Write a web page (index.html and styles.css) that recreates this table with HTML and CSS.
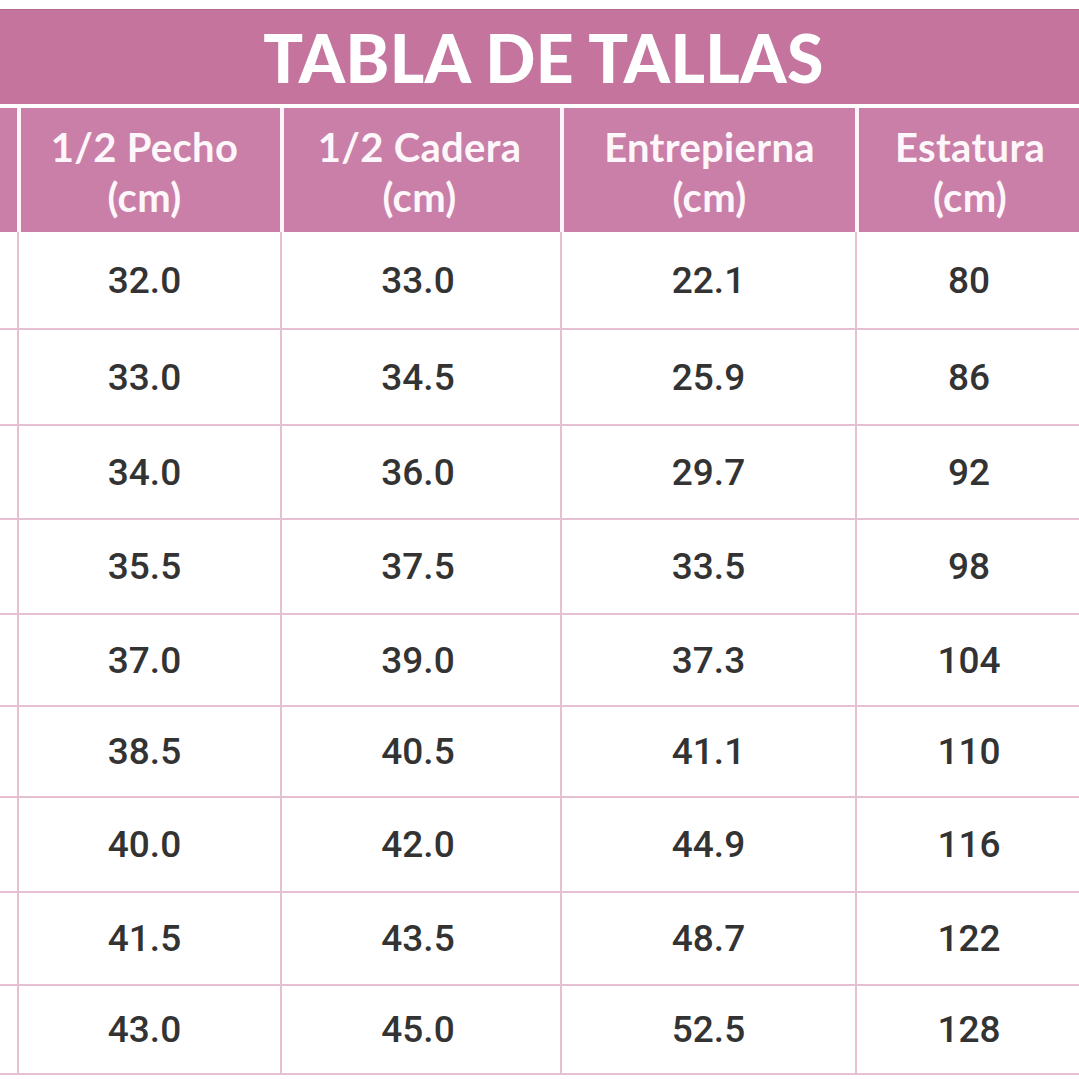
FILE: index.html
```html
<!DOCTYPE html>
<html lang="es">
<head>
<meta charset="utf-8">
<title>Tabla de tallas</title>
<link rel="stylesheet" href="styles.css">
</head>
<body>
<div class="page">
  <div class="title-bar"><h1 class="title">TABLA DE TALLAS</h1></div>
  <div class="table">
    <div class="hcell"></div>
    <div class="hcell c2"><span>1/2 Pecho</span><span>(cm)</span></div>
    <div class="hcell c3"><span>1/2 Cadera</span><span>(cm)</span></div>
    <div class="hcell"><span>Entrepierna</span><span>(cm)</span></div>
    <div class="hcell"><span>Estatura</span><span>(cm)</span></div>

    <div class="cell first"></div><div class="cell c2">32.0</div><div class="cell c3">33.0</div><div class="cell">22.1</div><div class="cell">80</div>
    <div class="cell first"></div><div class="cell c2">33.0</div><div class="cell c3">34.5</div><div class="cell">25.9</div><div class="cell">86</div>
    <div class="cell first"></div><div class="cell c2">34.0</div><div class="cell c3">36.0</div><div class="cell">29.7</div><div class="cell">92</div>
    <div class="cell first"></div><div class="cell c2">35.5</div><div class="cell c3">37.5</div><div class="cell">33.5</div><div class="cell">98</div>
    <div class="cell first"></div><div class="cell c2">37.0</div><div class="cell c3">39.0</div><div class="cell">37.3</div><div class="cell">104</div>
    <div class="cell first"></div><div class="cell c2">38.5</div><div class="cell c3">40.5</div><div class="cell">41.1</div><div class="cell">110</div>
    <div class="cell first"></div><div class="cell c2">40.0</div><div class="cell c3">42.0</div><div class="cell">44.9</div><div class="cell">116</div>
    <div class="cell first"></div><div class="cell c2">41.5</div><div class="cell c3">43.5</div><div class="cell">48.7</div><div class="cell">122</div>
    <div class="cell first"></div><div class="cell c2">43.0</div><div class="cell c3">45.0</div><div class="cell">52.5</div><div class="cell">128</div>
  </div>
</div>
</body>
</html>
```
FILE: styles.css
```css
html, body {
  margin: 0;
  padding: 0;
  background: #ffffff;
}
.page {
  width: 1079px;
  height: 1079px;
  overflow: hidden;
  padding-top: 9px;
  box-sizing: border-box;
}
.title-bar {
  height: 95px;
  background: #c4749d;
  border-top: 1px solid #b86890;
  box-sizing: border-box;
  display: flex;
  align-items: center;
  justify-content: center;
  margin-bottom: 4px;
}
.title {
  margin: 0;
  padding-top: 2px;
  padding-left: 8px;
  font-family: "Lato", "Liberation Sans", sans-serif;
  font-weight: 900;
  font-size: 66px;
  letter-spacing: 0.4px;
  color: #ffffff;
  line-height: 1;
}
.table {
  display: grid;
  grid-template-columns: 17px 263px 280px 295px 226px;
  grid-template-rows: 124px 98px 96px 94px 95px 92px 91px 95px 93px 89px;
}
.hcell {
  background: #c97fa7;
  border-left: 4px solid #fdf5f9;
  box-sizing: border-box;
  display: flex;
  flex-direction: column;
  align-items: center;
  justify-content: center;
  padding-top: 4px;
  font-family: "Lato", "Liberation Sans", sans-serif;
  font-weight: 700;
  font-size: 40px;
  line-height: 50px;
  letter-spacing: 0.3px;
  color: #fdf6fa;
}
.hcell:first-child {
  border-left: none;
}
.hcell.c2 {
  padding-right: 12px;
}
.hcell.c3 {
  padding-right: 5px;
}
.cell {
  border-left: 2px solid #e6bfd2;
  border-bottom: 2px solid #e6bfd2;
  box-sizing: border-box;
  display: flex;
  align-items: center;
  justify-content: center;
  font-family: "Roboto", "Liberation Sans", sans-serif;
  font-weight: 500;
  font-size: 37px;
  color: #333333;
}
.cell.first {
  border-left: none;
}
.cell.c2 {
  padding-right: 10px;
}
.cell.c3 {
  padding-right: 6px;
}
```
